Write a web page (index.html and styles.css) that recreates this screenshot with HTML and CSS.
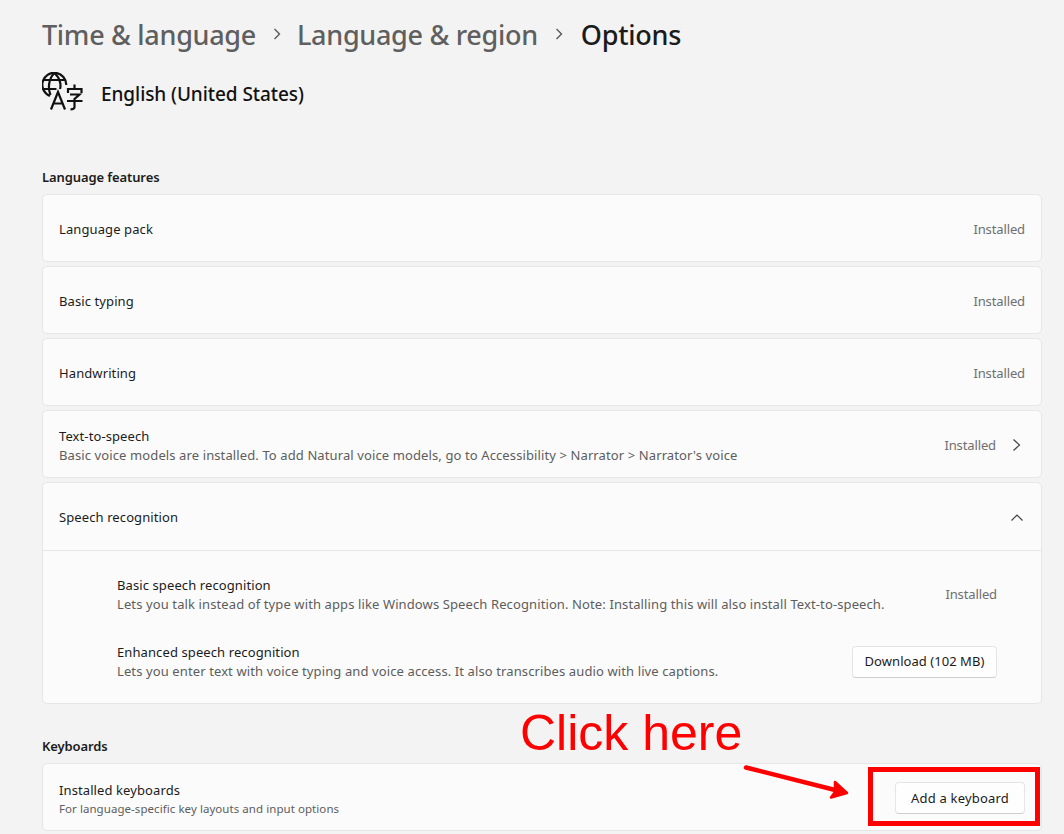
FILE: index.html
```html
<!DOCTYPE html>
<html lang="en">
<head>
<meta charset="utf-8">
<title>Options</title>
<link rel="stylesheet" href="styles.css">
</head>
<body>
<main class="page">
  <nav class="crumbs">
    <span class="crumb">Time &amp; language</span>
    <svg class="sep" viewBox="0 0 10 14"><path d="M2.500 2l5 5-5 5"/></svg>
    <span class="crumb">Language &amp; region</span>
    <svg class="sep" viewBox="0 0 10 14"><path d="M2.500 2l5 5-5 5"/></svg>
    <span class="crumb current">Options</span>
  </nav>
  <header class="lang-head">
    <svg class="lang-icon" viewBox="0 0 42 40">
      <g class="lang-stroke">
        <path d="M24.300 13A12 12 0 1 0 8 24"/>
        <path d="M8.500 23C6 17 6 7 12.500 1 19 7 19 14 18 17"/>
        <path d="M1.500 8h22M1.500 17h13"/>
        <path d="M9 37.500l7-17.500 7 17.500M11.500 31.500h9"/>
        <path d="M32.500 12.500v4M26 21v-4h13.500v4M28 22.500h9.500l-5 4.500v8c0 1.500-1 2.300-4 2.300M25 29h15.500"/>
      </g>
    </svg>
    <h1 class="lang-name">English (United States)</h1>
  </header>

  <h2 class="section first">Language features</h2>
  <div class="cards">
    <div class="card row"><span class="title">Language pack</span><span class="status">Installed</span></div>
    <div class="card row"><span class="title">Basic typing</span><span class="status">Installed</span></div>
    <div class="card row"><span class="title">Handwriting</span><span class="status">Installed</span></div>
    <div class="card row">
      <div class="text two-line">
        <span class="title">Text-to-speech</span>
        <span class="sub">Basic voice models are installed. To add Natural voice models, go to Accessibility &gt; Narrator &gt; Narrator's voice</span>
      </div>
      <div class="end">
        <span class="status">Installed</span>
        <svg class="chev" viewBox="0 0 16 16"><path d="M5.500 2.500l6 5.500-6 5.500"/></svg>
      </div>
    </div>
    <div class="card">
      <div class="row expander">
        <span class="title">Speech recognition</span>
        <svg class="chev" viewBox="0 0 16 16"><path d="M2.500 10.500l5.500-5.500 5.500 5.500"/></svg>
      </div>
      <div class="details">
        <div class="detail">
          <div class="text">
            <span class="title">Basic speech recognition</span>
            <span class="sub">Lets you talk instead of type with apps like Windows Speech Recognition. Note: Installing this will also install Text-to-speech.</span>
          </div>
          <span class="status">Installed</span>
        </div>
        <div class="detail">
          <div class="text">
            <span class="title">Enhanced speech recognition</span>
            <span class="sub">Lets you enter text with voice typing and voice access. It also transcribes audio with live captions.</span>
          </div>
          <button class="btn">Download (102 MB)</button>
        </div>
      </div>
    </div>
  </div>

  <h2 class="section">Keyboards</h2>
  <div class="card row">
    <div class="text two-line">
      <span class="title">Installed keyboards</span>
      <span class="sub small">For language-specific key layouts and input options</span>
    </div>
    <button class="btn kb">Add a keyboard</button>
  </div>
</main>

<div class="callout">Click here</div>
<svg class="arrow" viewBox="0 0 110 36"><path class="arrow-line" d="M3 3.500L100 28"/><path class="arrow-head" d="M92 18L104 29 88 33.500 92 28Z"/></svg>
<div class="redbox"></div>
</body>
</html>
```

FILE: styles.css
```css
* { box-sizing: border-box; }
html, body { margin: 0; height: 834px; overflow: hidden; }
body {
  position: relative;
  background: #f3f3f3;
  color: #1b1b1b;
  font-family: "Noto Sans", "Open Sans", sans-serif;
  font-size: 13px;
}
.page { width: 1000px; margin-left: 42px; padding-top: 15px; }
.crumbs { display: flex; align-items: center; height: 38px; font-size: 27px; font-weight: 500; letter-spacing: -0.3px; }
.crumb { color: #5f5f5f; white-space: nowrap; }
.crumb.current { color: #1b1b1b; margin-left: 2px; letter-spacing: -0.25px; }
.sep { width: 10px; height: 14px; margin: 0 15px 0 16px; fill: none; stroke: #5a5a5a; stroke-width: 1.4; }
.lang-head { display: flex; align-items: center; height: 40px; margin-top: 19px; }
.lang-icon { width: 42px; height: 40px; flex: none; }
.lang-stroke { fill: none; stroke: #111; stroke-width: 2.200; }
.lang-name { margin: 4px 0 0 17px; font-size: 19px; font-weight: 500; letter-spacing: -0.07px; color: #111; }
.section { margin: 32px 0 7px; height: 20px; line-height: 20px; font-size: 13px; font-weight: 600; letter-spacing: -0.1px; }
.section.first { margin-top: 55px; }
.cards { display: flex; flex-direction: column; gap: 4px; }
.card { background: #fbfbfb; border: 1px solid #e6e6e6; border-radius: 5px; }
.row { display: flex; align-items: center; justify-content: space-between; height: 68px; padding: 2px 16px 0; }
.text { display: flex; flex-direction: column; }
.text.two-line { margin-top: 2px; }
.title { font-size: 13px; line-height: 19px; letter-spacing: 0.1px; color: #1b1b1b; }
.sub { font-size: 13px; line-height: 19px; letter-spacing: 0.11px; color: #5d5d5d; white-space: nowrap; }
.sub.small { font-size: 11.500px; line-height: 18px; letter-spacing: 0.06px; }
.status { font-size: 13px; color: #6f6f6f; letter-spacing: -0.12px; }
.detail .status { margin-bottom: 2px; }
.end { display: flex; align-items: center; gap: 12px; margin-right: 1px; }
.chev { width: 16px; height: 16px; fill: none; stroke: #444; stroke-width: 1.200; }
.expander { border-bottom: 1px solid #e6e6e6; }
.details { display: flex; flex-direction: column; padding: 10px 44px 0 74px; height: 152px; }
.detail { display: flex; align-items: center; justify-content: space-between; height: 67px; }
.btn {
  flex: none;
  font: inherit;
  font-size: 13px;
  letter-spacing: 0.05px;
  color: #1b1b1b;
  height: 32px;
  width: 145px;
  padding: 0 0 2px;
  background: #fefefe;
  border: 1px solid #e5e5e5;
  border-bottom-color: #cfcfcf;
  border-radius: 4px;
}
.kb { width: 130px; padding: 0; letter-spacing: 0.2px; }
.callout { position: absolute; left: 520px; top: 703px; font-family: "Liberation Sans", Arial, sans-serif; font-size: 50px; line-height: 60px; color: #f00; }
.arrow { position: absolute; left: 743px; top: 764px; width: 110px; height: 36px; }
.arrow-line { fill: none; stroke: #f00; stroke-width: 4.500; stroke-linecap: round; }
.arrow-head { fill: #f00; stroke: #f00; stroke-width: 2.500; stroke-linejoin: round; }
.redbox { position: absolute; left: 868px; top: 767px; width: 172px; height: 59px; border: 5px solid #f00; }
```
